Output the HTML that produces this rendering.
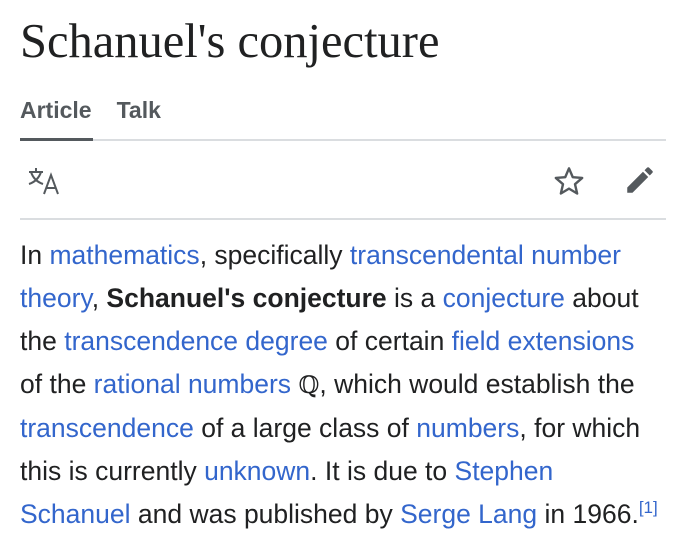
<!DOCTYPE html>
<html><head><style>
body{margin:0;width:680px;height:542px;background:#fff;overflow:hidden;font-family:"Liberation Sans",Arial,sans-serif;color:#202122}
h1{position:absolute;left:20px;top:14px;margin:0;font-family:"Liberation Serif",serif;font-weight:normal;font-size:48.5px;line-height:56px;color:#202122}
.tabs{position:absolute;left:20px;top:97px;font-weight:bold;font-size:23px;color:#54595d}
.tabs span{margin-right:25px}
.tl{position:absolute;left:20px;top:139px;width:646px;height:2px;background:#dadde0}
.ta{position:absolute;left:20px;top:138px;width:73px;height:3px;background:#54595d}
.bl{position:absolute;left:20px;top:218px;width:646px;height:2px;background:#dadde0}
.p{position:absolute;left:20px;top:234px;font-size:26.5px;line-height:43px;white-space:nowrap}
a{color:#3366cc;text-decoration:none}
sup{font-size:17px;line-height:0;color:#3366cc}
.q{font-family:"DejaVu Serif",serif;font-size:24px}
</style></head><body>
<h1>Schanuel's conjecture</h1>
<div class="tabs"><span>Article</span><span>Talk</span></div>
<div class="tl"></div><div class="ta"></div>
<svg style="position:absolute;left:26px;top:166px" width="38" height="32" viewBox="0 0 38 32" fill="none" stroke="#54595d" stroke-width="2">
<path d="M3 6h14M10 2v4M5 6c2 6 6 10 12 12M15 6c-2 6-6 10-12 12"/>
<path d="M18 28l7-19 7 19M21 22h8"/>
</svg>
<svg style="position:absolute;left:553px;top:165px" width="32" height="32" viewBox="0 0 24 24"><path d="M12 2.5l2.8 6.6 7.1.6-5.4 4.7 1.6 7L12 17.7l-6.1 3.7 1.6-7L2.1 9.7l7.1-.6z" fill="none" stroke="#54595d" stroke-width="1.8" stroke-linejoin="round"/></svg>
<svg style="position:absolute;left:623px;top:163px" width="34" height="34" viewBox="0 0 24 24"><path d="M3 17.3V21h3.7L17.8 9.9l-3.7-3.7zM20.7 7a1 1 0 000-1.4l-2.3-2.3a1 1 0 00-1.4 0l-1.8 1.8 3.7 3.7z" fill="#54595d"/></svg>
<div class="bl"></div>
<div class="p">In <a>mathematics</a>, specifically <a>transcendental number</a><br>
<a>theory</a>, <b>Schanuel's conjecture</b> is a <a>conjecture</a> about<br>
the <a>transcendence degree</a> of certain <a>field extensions</a><br>
of the <a>rational numbers</a> <span class="q">ℚ</span>, which would establish the<br>
<a>transcendence</a> of a large class of <a>numbers</a>, for which<br>
this is currently <a>unknown</a>. It is due to <a>Stephen</a><br>
<a>Schanuel</a> and was published by <a>Serge Lang</a> in 1966.<sup>[1]</sup></div>
</body></html>
